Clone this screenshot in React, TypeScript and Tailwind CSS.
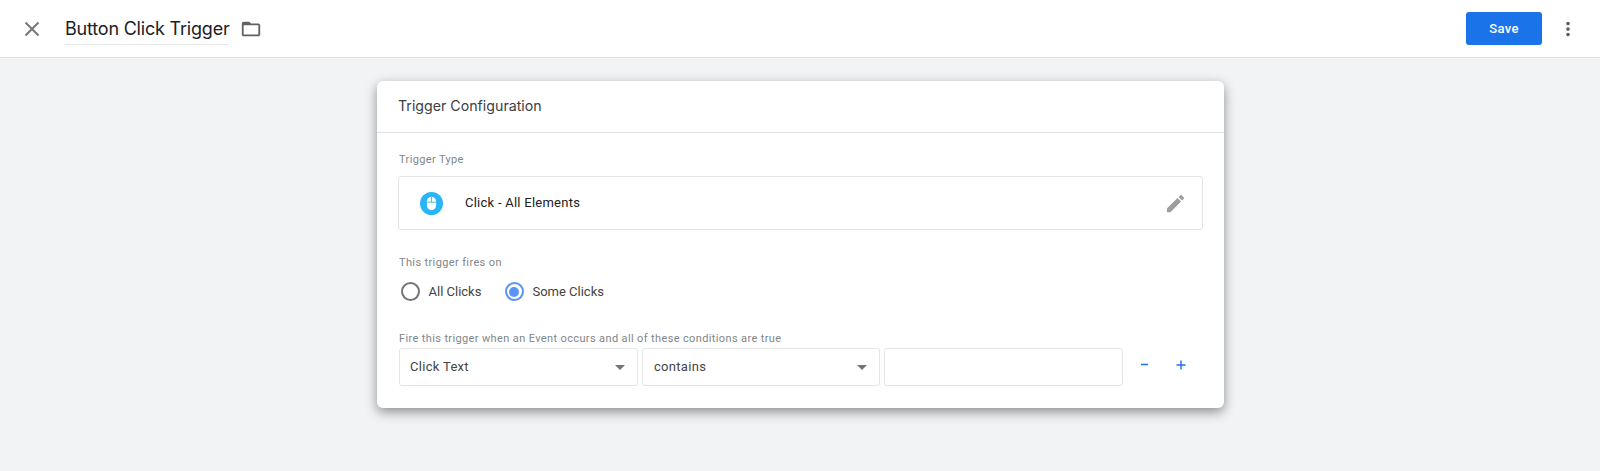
const roboto = "font-['Roboto',sans-serif]";

function Arrow() {
  return <span className="w-0 h-0 border-x-[5px] border-x-transparent border-t-[5px] border-t-[#757575]" />;
}

function Select({ label, className }: { label: string; className: string }) {
  return (
    <div className={`h-[38px] flex items-center justify-between pr-[12px] bg-white border border-[#e5e5e5] rounded-[3px] text-[13px] tracking-[0.3px] text-[#444] ${className}`}>
      <span>{label}</span>
      <Arrow />
    </div>
  );
}

function Radio({ label, checked }: { label: string; checked?: boolean }) {
  return (
    <div className="flex items-center gap-[8.5px] h-[19px]">
      {checked ? (
        <span className="w-[19px] h-[19px] rounded-full border-2 border-[#5a95f5] flex items-center justify-center">
          <span className="w-[10px] h-[10px] rounded-full bg-[#5a95f5]" />
        </span>
      ) : (
        <span className="w-[19px] h-[19px] rounded-full border-2 border-[#757575]" />
      )}
      <span className="text-[13px] text-[#444]">{label}</span>
    </div>
  );
}

const labelCls = "text-[11px] leading-[12px] tracking-[0.37px] text-[#80868b]";

export default function App() {
  return (
    <div className={`w-[1600px] h-[471px] overflow-hidden bg-[#f1f3f4] ${roboto}`}>
      <header className="h-[58px] bg-white border-b border-[#dfdfdf] flex items-center pl-[19px] pr-[21px]">
        <svg viewBox="0 0 24 24" className="w-[26px] h-[26px]" fill="none" stroke="#757575" strokeWidth="1.8">
          <path d="M6 6l12 12M18 6L6 18" />
        </svg>
        <div className="ml-[20px] w-[163px] h-[32px] border-b border-[#e6e6e6] font-['Inter',sans-serif] text-[18px] leading-[31px] text-[#202124] whitespace-nowrap tracking-[-0.2px]">
          Button Click Trigger
        </div>
        <svg viewBox="0 0 24 24" className="ml-[12px] w-[22px] h-[22px]" fill="#616161">
          <path d="M20 6h-8l-2-2H4c-1.1 0-2 .9-2 2v12c0 1.1.9 2 2 2h16c1.1 0 2-.9 2-2V8c0-1.1-.9-2-2-2zm0 12H4V8h16v10z" />
        </svg>
        <button className="ml-auto w-[76px] h-[33px] bg-[#1a73e8] rounded-[3px] text-white text-[13px] font-medium tracking-[0.3px]">
          Save
        </button>
        <svg viewBox="0 0 24 24" className="ml-[15px] w-[22px] h-[22px]" fill="#616161">
          <path d="M12 8c1.1 0 2-.9 2-2s-.9-2-2-2-2 .9-2 2 .9 2 2 2zm0 2c-1.1 0-2 .9-2 2s.9 2 2 2 2-.9 2-2-.9-2-2-2zm0 6c-1.1 0-2 .9-2 2s.9 2 2 2 2-.9 2-2-.9-2-2-2z" />
        </svg>
      </header>

      <main className="pt-[23px] pl-[377px]">
        <section className="w-[847px] h-[327px] bg-white rounded-[6px] shadow-[0_4px_12px_rgba(0,0,0,0.42)]">
          <div className="h-[52px] border-b border-[#e0e0e0] flex items-center pl-[21px] pb-[1px] font-['Inter',sans-serif] text-[14.2px] text-[#3c4043]">
            Trigger Configuration
          </div>
          <div className="pl-[21px] pr-[21px]">
            <p className={`mt-[21px] ml-[1px] ${labelCls}`}>Trigger Type</p>
            <div className="mt-[10px] h-[54px] border border-[#e5e5e5] rounded-[3px] flex items-center pl-[21px] pr-[15px]">
              <svg viewBox="0 0 24 24" className="w-[23px] h-[23px]">
                <circle cx="12" cy="12" r="12" fill="#29b6f6" />
                <rect x="7.2" y="5" width="9.6" height="14" rx="4.8" fill="white" />
                <path d="M12 5v5.6M7.2 10.6h9.6" stroke="#29b6f6" strokeWidth="0.9" fill="none" />
              </svg>
              <span className="ml-[22px] text-[13px] font-[450] tracking-[0.25px] text-[#212121]">Click - All Elements</span>
              <svg viewBox="0 0 24 24" className="ml-auto w-[23px] h-[23px]" fill="#9e9e9e">
                <path d="M3 17.25V21h3.75L17.81 9.94l-3.75-3.75L3 17.25zM20.71 7.04a1 1 0 0 0 0-1.41l-2.34-2.34a1 1 0 0 0-1.41 0l-1.83 1.83 3.75 3.75 1.83-1.83z" />
              </svg>
            </div>
            <p className={`mt-[27px] ml-[1px] ${labelCls}`}>This trigger fires on</p>
            <div className="mt-[13px] ml-[3px] flex items-center gap-[23.5px]">
              <Radio label="All Clicks" />
              <Radio label="Some Clicks" checked />
            </div>
            <p className={`mt-[32px] ml-[1px] ${labelCls}`}>
              Fire this trigger when an Event occurs and all of these conditions are true
            </p>
            <div className="mt-[3px] ml-[1px] flex items-center gap-[4px]">
              <Select label="Click Text" className="w-[239px] pl-[10px]" />
              <Select label="contains" className="w-[238px] pl-[11px]" />
              <div className="w-[239px] h-[38px] bg-white border border-[#e5e5e5] rounded-[3px]" />
              <svg viewBox="0 0 7 7" className="ml-[14px] mb-[6px] w-[7px] h-[7px]">
                <path d="M0 3.5h7" stroke="#1a73e8" strokeWidth="1.5" />
              </svg>
              <svg viewBox="0 0 10 10" className="ml-[24px] mb-[4px] w-[10px] h-[10px]">
                <path d="M0.5 5h9M5 0.5v9" stroke="#1a73e8" strokeWidth="1.4" />
              </svg>
            </div>
          </div>
        </section>
      </main>
    </div>
  );
}
